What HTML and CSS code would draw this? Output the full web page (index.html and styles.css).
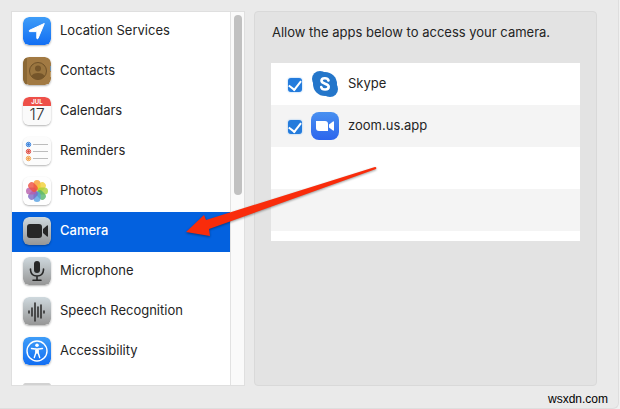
FILE: index.html
```html
<!DOCTYPE html>
<html lang="en">
<head>
    <meta charset="UTF-8">
    <meta name="viewport" content="width=device-width, initial-scale=1.0">
    <title>Security &amp; Privacy</title>
    <link rel="stylesheet" href="styles.css">
</head>
<body>

<div class="window">
    <main class="content">
        <div class="sidebar">
            <nav class="sidebar-list" aria-label="Privacy categories">
                <a class="sidebar-item" href="#location">
                    <svg class="icon" viewBox="0 0 28 28" aria-hidden="true">
                        <defs><linearGradient id="blue" x1="0" y1="0" x2="0" y2="1"><stop offset="0" stop-color="#3f9df8"/><stop offset="1" stop-color="#126ef3"/></linearGradient></defs>
                        <rect width="28" height="28" rx="6" fill="url(#blue)"/>
                        <path d="M21.3 6.500 15 21.500 Q14 22.500 13.800 21V14.600H6.500Q5.500 14 6.500 13.300Z" fill="#fff" stroke="#fff" stroke-width="1" stroke-linejoin="round"/>
                    </svg>
                    <span class="item-label">Location Services</span>
                </a>
                <a class="sidebar-item" href="#contacts">
                    <svg class="icon" viewBox="0 0 28 28" aria-hidden="true">
                        <rect width="28" height="28" rx="6" fill="#a27a43"/>
                        <path d="M6 0Q0 0 0 6V22Q0 28 6 28H4V0Z" fill="#8b6835"/>
                        <path d="M27 9h1v5h-1z" fill="#7193ad"/>
                        <path d="M27 15h1v5h-1z" fill="#c3a16d"/>
                        <circle cx="15" cy="14" r="8.500" fill="#9a753f" stroke="#705229"/>
                        <circle cx="15" cy="11.500" r="3" fill="#75552a"/>
                        <path d="M8.500 19Q10 16 15 16T21.500 19Q19 22.500 15 22.500T8.500 19Z" fill="#75552a"/>
                    </svg>
                    <span class="item-label">Contacts</span>
                </a>
                <a class="sidebar-item" href="#calendars">
                    <svg class="icon" viewBox="0 0 28 28" aria-hidden="true">
                        <rect width="28" height="28" rx="6" fill="#fafafa"/>
                        <path d="M0 9V6Q0 0 6 0H22Q28 0 28 6V9Z" fill="#ee5049"/>
                        <text x="14" y="7" class="calendar-month">JUL</text>
                        <text x="14" y="23" class="calendar-day">17</text>
                    </svg>
                    <span class="item-label">Calendars</span>
                </a>
                <a class="sidebar-item" href="#reminders">
                    <svg class="icon" viewBox="0 0 28 28" aria-hidden="true">
                        <rect width="28" height="28" rx="6" fill="#fcfcfc"/>
                        <path d="M10 7.500H25M10 14.500H25M10 21.500H25" stroke="#bcbcbc"/>
                        <g fill="none" stroke-width="1">
                            <g stroke="#347fdb"><circle cx="5.500" cy="7.500" r="2.200"/><circle cx="5.500" cy="7.500" r="1" fill="#347fdb"/></g>
                            <g stroke="#df4b43"><circle cx="5.500" cy="14.500" r="2.200"/><circle cx="5.500" cy="14.500" r="1" fill="#df4b43"/></g>
                            <g stroke="#f2a14b"><circle cx="5.500" cy="21.500" r="2.200"/><circle cx="5.500" cy="21.500" r="1" fill="#f2a14b"/></g>
                        </g>
                    </svg>
                    <span class="item-label">Reminders</span>
                </a>
                <a class="sidebar-item" href="#photos">
                    <svg class="icon" viewBox="0 0 28 28" aria-hidden="true">
                        <rect width="28" height="28" rx="6" fill="#fefefe"/>
                        <g class="petals">
                            <rect x="10.500" y="3" width="7" height="10.500" rx="3.500" fill="#f79a2e"/>
                            <rect x="10.500" y="3" width="7" height="10.500" rx="3.500" fill="#f1cf35" transform="rotate(45 14 14)"/>
                            <rect x="10.500" y="3" width="7" height="10.500" rx="3.500" fill="#a9cf3a" transform="rotate(90 14 14)"/>
                            <rect x="10.500" y="3" width="7" height="10.500" rx="3.500" fill="#55b56c" transform="rotate(135 14 14)"/>
                            <rect x="10.500" y="3" width="7" height="10.500" rx="3.500" fill="#55a0e2" transform="rotate(180 14 14)"/>
                            <rect x="10.500" y="3" width="7" height="10.500" rx="3.500" fill="#7c68c4" transform="rotate(225 14 14)"/>
                            <rect x="10.500" y="3" width="7" height="10.500" rx="3.500" fill="#b55dab" transform="rotate(270 14 14)"/>
                            <rect x="10.500" y="3" width="7" height="10.500" rx="3.500" fill="#ef4f40" transform="rotate(315 14 14)"/>
                        </g>
                    </svg>
                    <span class="item-label">Photos</span>
                </a>
                <a class="sidebar-item active" href="#camera" aria-current="page">
                    <svg class="icon" viewBox="0 0 28 28" aria-hidden="true">
                        <defs><linearGradient id="gray" x1="0" y1="0" x2="0" y2="1"><stop offset="0" stop-color="#cfd9de"/><stop offset="1" stop-color="#969696"/></linearGradient></defs>
                        <rect width="28" height="28" rx="6" fill="url(#gray)"/>
                        <rect x="4" y="7" width="15" height="14" rx="3" fill="#272727"/>
                        <path d="M20 12 24 8.500Q25 8 25 9V19Q25 20 24 19.500L20 16Z" fill="#272727"/>
                    </svg>
                    <span class="item-label">Camera</span>
                </a>
                <a class="sidebar-item" href="#microphone">
                    <svg class="icon" viewBox="0 0 28 28" aria-hidden="true">
                        <rect width="28" height="28" rx="6" fill="url(#gray)"/>
                        <rect x="11" y="4" width="6" height="12" rx="3" fill="#272727"/>
                        <path d="M7.500 12V13Q8 19 14 19T20.500 13V12M14 19V23M10 23.300H18" fill="none" stroke="#272727" stroke-width="1.600" stroke-linecap="round"/>
                    </svg>
                    <span class="item-label">Microphone</span>
                </a>
                <a class="sidebar-item" href="#speech">
                    <svg class="icon" viewBox="0 0 28 28" aria-hidden="true">
                        <rect width="28" height="28" rx="6" fill="url(#gray)"/>
                        <path d="M6 14V16M9 11V19M12 6V24M15 10V20M18 8V21M21 14V16" stroke="#303030" stroke-width="1.600" stroke-linecap="round"/>
                    </svg>
                    <span class="item-label">Speech Recognition</span>
                </a>
                <a class="sidebar-item" href="#accessibility">
                    <svg class="icon" viewBox="0 0 28 28" aria-hidden="true">
                        <rect width="28" height="28" rx="6" fill="url(#blue)"/>
                        <circle cx="14" cy="14" r="10" fill="none" stroke="#fff" stroke-width="1.400"/>
                        <circle cx="14" cy="8.300" r="1.800" fill="#fff"/>
                        <path d="M8.500 11.500 14 12.200 19.500 11.500M14 12V16M12.800 12V16L11.300 20.500M15.200 12V16L16.700 20.500" fill="none" stroke="#fff" stroke-width="1.400" stroke-linecap="round" stroke-linejoin="round"/>
                    </svg>
                    <span class="item-label">Accessibility</span>
                </a>
                <a class="sidebar-item last" href="#more" aria-label="More">
                    <svg class="icon" viewBox="0 0 28 28" aria-hidden="true">
                        <rect width="28" height="28" rx="2" fill="#d2d2d2"/>
                    </svg>
                </a>
            </nav>
            <div class="scroll-track"><div class="scroll-thumb"></div></div>
        </div>

        <section class="panel">
            <p class="panel-text">Allow the apps below to access your camera.</p>
            <div class="app-list">
                <label class="app-row">
                    <input type="checkbox" class="app-check" checked>
                    <svg class="app-icon" viewBox="0 0 28 28" aria-hidden="true">
                        <circle cx="9" cy="9" r="8" fill="#2476ca"/>
                        <circle cx="19" cy="19" r="8" fill="#2476ca"/>
                        <circle cx="14" cy="14" r="12" fill="#2476ca"/>
                        <path d="M17.500 10.500C16.500 7.300 10.500 7.600 10.500 10.800C10.500 14.300 17.700 13.200 17.700 16.800C17.700 20.300 11 20.500 10.200 17" fill="none" stroke="#fff" stroke-width="2.600" stroke-linecap="round"/>
                    </svg>
                    <span class="item-label">Skype</span>
                </label>
                <label class="app-row">
                    <input type="checkbox" class="app-check" checked>
                    <svg class="app-icon" viewBox="0 0 28 28" aria-hidden="true">
                        <defs><linearGradient id="zoom" x1="0" y1="0" x2="0" y2="1"><stop offset="0" stop-color="#4890f0"/><stop offset="1" stop-color="#2d65ed"/></linearGradient></defs>
                        <rect width="28" height="28" rx="8" fill="url(#zoom)"/>
                        <path d="M5 9H14Q17 9 17 12V19H8Q5 19 5 16Z" fill="#fff"/>
                        <path d="M18 12.500 22 9.500Q23 9 23 10V18Q23 19 22 18.500L18 15.500Z" fill="#fff"/>
                    </svg>
                    <span class="item-label">zoom.us.app</span>
                </label>
            </div>
        </section>
    </main>
    <footer class="footer">wsxdn.com</footer>

    <svg class="arrow" viewBox="0 0 200 80" aria-hidden="true">
        <path d="M6 72 24 55 26 60 195 7Q197 7 196 9L29 69 30 76Z" fill="#f92c0b"/>
    </svg>
</div>

</body>
</html>
```
FILE: styles.css
```css
* {
    box-sizing: border-box;
}
body {
    margin: 0;
    background-color: #f1f1f1;
    font-family: Inter, "Liberation Sans", sans-serif;
    font-size: 13px;
    line-height: 20px;
    color: #242424;
}
.window {
    position: relative;
    display: flex;
    flex-direction: column;
    height: 100vh;
    margin-right: 1px;
    padding-top: 11px;
    background-color: #eaeaea;
    border-right: 1px solid #dedede;
    border-bottom: 1px solid #dedede;
    border-bottom-right-radius: 6px;
}
.content {
    display: grid;
    grid-template-columns: minmax(200px, 234px) 1fr;
    gap: 9px;
    flex: 1;
    min-height: 0;
    padding: 0 21px 0 11px;
}
.sidebar {
    display: flex;
    min-height: 0;
    background-color: #fff;
    border: 1px solid #dfdfdf;
}
.sidebar-list {
    flex: 1;
    overflow: hidden;
}
.sidebar-item {
    display: flex;
    align-items: center;
    gap: 9px;
    height: 40px;
    padding: 0 11px 2px;
    color: inherit;
    text-decoration: none;
}
.sidebar-item.active {
    background-color: #0361df;
    color: #fff;
    font-weight: 500;
}
.sidebar-item.last {
    align-items: flex-start;
    padding-top: 11px;
}
.item-label {
    padding-bottom: 2px;
}
.icon {
    flex: none;
    width: 28px;
    height: 28px;
    border-radius: 6px;
    box-shadow: 0 1px 2px rgba(0, 0, 0, 0.3);
}
.last .icon {
    border-radius: 2px;
    box-shadow: none;
}
.calendar-month {
    font-size: 6px;
    font-weight: 700;
    fill: #fff;
    text-anchor: middle;
}
.calendar-day {
    font-size: 16px;
    font-weight: 300;
    fill: #333;
    text-anchor: middle;
}
.petals rect {
    opacity: 0.8;
}
.scroll-track {
    width: 14px;
    padding: 3px;
    background-color: #fafafa;
    border-left: 1px solid #e2e2e2;
}
.scroll-thumb {
    width: 8px;
    height: 49%;
    background-color: #c1c1c1;
    border-radius: 4px;
}
.panel {
    padding: 10px 16px;
    background-color: #e3e3e3;
    border: 1px solid #d9d9d9;
    border-radius: 4px;
}
.panel-text {
    margin: 0 1px 21px;
}
.app-list {
    height: 178px;
    background: repeating-linear-gradient(#fff 0 42px, #f4f4f4 42px 84px);
}
.app-row {
    display: flex;
    align-items: center;
    height: 42px;
    padding-left: 17px;
}
.app-check {
    appearance: none;
    display: grid;
    place-items: center;
    width: 14px;
    height: 14px;
    margin: 2px 9px 0 0;
    border-radius: 3px;
    background-color: #237bdc;
    box-shadow: 0 0 2px #80baf3;
}
.app-check:checked::after {
    content: "";
    width: 6px;
    height: 10px;
    margin-bottom: 2px;
    border: solid #fff;
    border-width: 0 2px 2px 0;
    transform: rotate(38deg);
}
.app-icon {
    width: 28px;
    height: 28px;
    margin-right: 9px;
}
.footer {
    padding: 4px 10px 0 0;
    color: #000;
    font-family: "Liberation Sans", Arial, sans-serif;
    font-size: 12px;
    text-align: right;
    line-height: 18px;
}
/* Callout drawn over the sidebar and the panel */
.arrow {
    position: absolute;
    top: 160px;
    left: 180px;
    width: 200px;
    height: 80px;
    filter: drop-shadow(0 1px 1px rgba(0, 0, 0, 0.4));
    pointer-events: none;
}
```
